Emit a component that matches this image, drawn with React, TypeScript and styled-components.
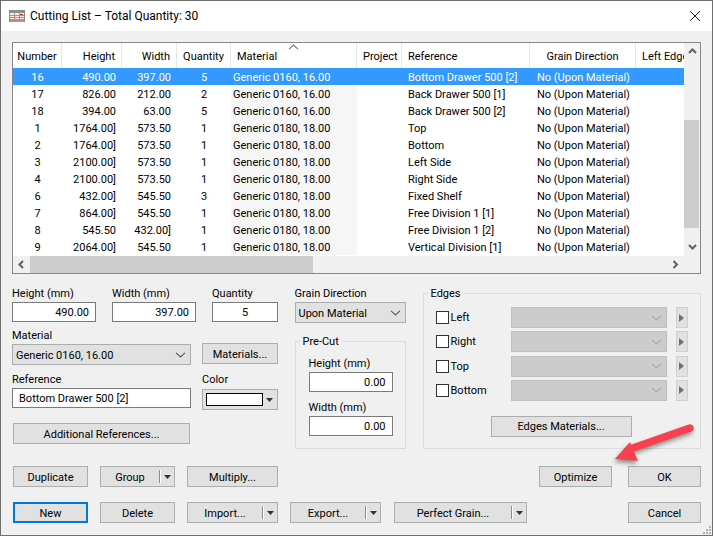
import styled, { createGlobalStyle } from "styled-components";

const GlobalStyle = createGlobalStyle`
  * {
    box-sizing: border-box;
  }

  body {
    margin: 0;
    background: #f0f0f0;
    font-family: Roboto, "Noto Sans", sans-serif;
    font-size: 11px;
    color: #000;
  }
`;

const COLUMNS = "49px 60px 55px 54px 126px 45px 128px 106px 100px";

const rows = [
  ["16", "490.00", "397.00", "5", "Generic 0160, 16.00", "Bottom Drawer 500 [2]"],
  ["17", "826.00", "212.00", "2", "Generic 0160, 16.00", "Back Drawer 500 [1]"],
  ["18", "394.00", "63.00", "5", "Generic 0160, 16.00", "Back Drawer 500 [2]"],
  ["1", "1764.00]", "573.50", "1", "Generic 0180, 18.00", "Top"],
  ["2", "1764.00]", "573.50", "1", "Generic 0180, 18.00", "Bottom"],
  ["3", "2100.00]", "573.50", "1", "Generic 0180, 18.00", "Left Side"],
  ["4", "2100.00]", "573.50", "1", "Generic 0180, 18.00", "Right Side"],
  ["6", "432.00]", "545.50", "3", "Generic 0180, 18.00", "Fixed Shelf"],
  ["7", "864.00]", "545.50", "1", "Generic 0180, 18.00", "Free Division 1 [1]"],
  ["8", "545.50", "432.00]", "1", "Generic 0180, 18.00", "Free Division 1 [2]"],
  ["9", "2064.00]", "545.50", "1", "Generic 0180, 18.00", "Vertical Division [1]"],
];

const Chevron = ({ color = "#5a5a5a", up = false }: { color?: string; up?: boolean }) => (
  <svg width="11" height="6" viewBox="0 0 11 6" style={up ? { transform: "rotate(180deg)" } : undefined}>
    <path d="M1 0.8 L5.5 5 L10 0.8" fill="none" stroke={color} strokeWidth="1.1" />
  </svg>
);

const BoldArrow = ({ dir }: { dir: "up" | "down" | "left" | "right" }) => {
  const paths = {
    up: "M1 6 L4.5 2.5 L8 6",
    down: "M1 2 L4.5 5.5 L8 2",
    left: "M6 1 L2.5 4.5 L6 8",
    right: "M2.5 1 L6 4.5 L2.5 8",
  };
  return (
    <svg width="9" height="9" viewBox="0 0 9 9">
      <path d={paths[dir]} fill="none" stroke="#606060" strokeWidth="2" />
    </svg>
  );
};

const Caret = () => (
  <svg width="7" height="4" viewBox="0 0 7 4">
    <path d="M0 0 H7 L3.5 4 Z" fill="#333" />
  </svg>
);

const TitleIcon = () => (
  <svg width="16" height="13" viewBox="0 0 16 13">
    <rect x="0.5" y="0.5" width="15" height="11" fill="#f3efe9" stroke="#8b8b85" />
    <rect x="1" y="1" width="14" height="2" fill="#7f9a80" />
    <rect x="1" y="9" width="14" height="3" fill="#d98080" />
    <path d="M1 5.5 H15 M1 7.5 H15 M5.5 3 V9 M10.5 3 V9" stroke="#c08a8a" strokeWidth="1" />
    <rect x="11" y="4" width="3" height="1" fill="#c83030" />
  </svg>
);

const SplitButton = ({ label, width }: { label: string; width: number }) => (
  <Button $width={width}>
    <SplitLabel>{label}</SplitLabel>
    <SplitDivider />
    <SplitCaret>
      <Caret />
    </SplitCaret>
  </Button>
);

const Select = ({ value, width }: { value: string; width: number }) => (
  <SelectBox $width={width}>
    <SelectValue>{value}</SelectValue>
    <Chevron />
  </SelectBox>
);

const EdgeRow = ({ label }: { label: string }) => (
  <EdgeLine>
    <Checkbox />
    <EdgeLabel>{label}</EdgeLabel>
    <SelectBox $width={156} $disabled>
      <span />
      <Chevron color="#a8a8a8" />
    </SelectBox>
    <MiniButton>
      <svg width="5" height="8" viewBox="0 0 5 8">
        <path d="M0 0 L5 4 L0 8 Z" fill="#707070" />
      </svg>
    </MiniButton>
  </EdgeLine>
);

const App = () => {
  return (
    <Window>
      <GlobalStyle />
      <TitleBar>
        <TitleIcon />
        <TitleText>Cutting List – Total Quantity: 30</TitleText>
        <CloseIcon width="12" height="12" viewBox="0 0 12 12">
          <path d="M1 1 L11 11 M11 1 L1 11" stroke="#222" strokeWidth="1" fill="none" />
        </CloseIcon>
      </TitleBar>

      <Body>
        <TableFrame>
          <Viewport>
            <HeaderRow>
              <HeaderCell>Number</HeaderCell>
              <HeaderCell $align="right">Height</HeaderCell>
              <HeaderCell $align="right">Width</HeaderCell>
              <HeaderCell>Quantity</HeaderCell>
              <HeaderCell $align="left">
                <SortMark>
                  <Chevron color="#777" up />
                </SortMark>
                Material
              </HeaderCell>
              <HeaderCell $align="left">Project</HeaderCell>
              <HeaderCell $align="left">Reference</HeaderCell>
              <HeaderCell>Grain Direction</HeaderCell>
              <HeaderCell $align="left">Left Edge</HeaderCell>
            </HeaderRow>
            {rows.map((row, i) => (
              <Row key={row[0]} $selected={i === 0}>
                <Cell $align="center">{row[0]}</Cell>
                <Cell $align="right">{row[1]}</Cell>
                <Cell $align="right">{row[2]}</Cell>
                <Cell $align="center">{row[3]}</Cell>
                <MaterialCell $selected={i === 0}>{row[4]}</MaterialCell>
                <Cell />
                <Cell $align="left">{row[5]}</Cell>
                <GrainCell>No (Upon Material)</GrainCell>
                <Cell />
              </Row>
            ))}
          </Viewport>
          <VScroll>
            <ScrollEnd $h={17}>
              <BoldArrow dir="up" />
            </ScrollEnd>
            <VThumb />
            <ScrollEnd $h={17}>
              <BoldArrow dir="down" />
            </ScrollEnd>
          </VScroll>
          <HScroll>
            <ScrollEnd $w={17}>
              <BoldArrow dir="left" />
            </ScrollEnd>
            <HThumb />
            <ScrollEnd $w={17}>
              <BoldArrow dir="right" />
            </ScrollEnd>
          </HScroll>
          <Corner />
        </TableFrame>

        <Form>
          <LeftColumn>
            <SizeRow>
              <Field>
                <Label>Height (mm)</Label>
                <Input $width={84}>490.00</Input>
              </Field>
              <Field>
                <Label>Width (mm)</Label>
                <Input $width={84}>397.00</Input>
              </Field>
              <Field>
                <Label>Quantity</Label>
                <Input $width={66} $center>
                  5
                </Input>
              </Field>
            </SizeRow>
            <MaterialRow>
              <Field>
                <Label>Material</Label>
                <Select value="Generic 0160, 16.00" width={179} />
              </Field>
              <Button $width={76} $mb={1}>
                Materials...
              </Button>
            </MaterialRow>
            <ReferenceRow>
              <Field>
                <Label>Reference</Label>
                <Input $width={179} $left>
                  Bottom Drawer 500 [2]
                </Input>
              </Field>
              <Field>
                <Label>Color</Label>
                <ColorBox>
                  <ColorSwatch />
                  <Caret />
                </ColorBox>
              </Field>
            </ReferenceRow>
            <AdditionalButton $width={177}>Additional References...</AdditionalButton>
          </LeftColumn>

          <MiddleColumn>
            <Field>
              <Label>Grain Direction</Label>
              <Select value="Upon Material" width={111} />
            </Field>
            <PreCutGroup>
              <GroupTitle $shift={-9}>Pre-Cut</GroupTitle>
              <Field>
                <Label>Height (mm)</Label>
                <Input $width={84}>0.00</Input>
              </Field>
              <Field>
                <Label>Width (mm)</Label>
                <Input $width={84}>0.00</Input>
              </Field>
            </PreCutGroup>
          </MiddleColumn>

          <EdgesGroup>
            <GroupTitle $shift={-8}>Edges</GroupTitle>
            <EdgeList>
              <EdgeRow label="Left" />
              <EdgeRow label="Right" />
              <EdgeRow label="Top" />
              <EdgeRow label="Bottom" />
            </EdgeList>
            <EdgesButton $width={141}>Edges Materials...</EdgesButton>
          </EdgesGroup>
        </Form>

        <ActionRow $top={17}>
          <Button $width={75}>Duplicate</Button>
          <SplitButton label="Group" width={75} />
          <Button $width={91}>Multiply...</Button>
          <RightActions>
            <Button $width={73}>Optimize</Button>
            <Button $width={73}>OK</Button>
          </RightActions>
        </ActionRow>
        <ActionRow $top={15}>
          <Button $width={75} $default>
            New
          </Button>
          <Button $width={75}>Delete</Button>
          <SplitButton label="Import..." width={91} />
          <SplitButton label="Export..." width={91} />
          <PerfectGrain>
            <SplitButton label="Perfect Grain..." width={133} />
          </PerfectGrain>
          <RightActions>
            <Button $width={73}>Cancel</Button>
          </RightActions>
        </ActionRow>
      </Body>

      <Grip width="10" height="10" viewBox="0 0 10 10">
        <path d="M7 1h2v2H7z M4 4h2v2H4z M7 4h2v2H7z M1 7h2v2H1z M4 7h2v2H4z M7 7h2v2H7z" fill="#b4b4b4" />
      </Grip>

      <Callout width="90" height="50" viewBox="0 0 90 50">
        <path d="M80 6 L20 27" stroke="#f8404f" strokeWidth="7.5" strokeLinecap="round" fill="none" />
        <path d="M5 37 L20 20 L28 39 Z" fill="#f8404f" />
      </Callout>
    </Window>
  );
};

export default App;

const Window = styled.div`
  position: relative;
  display: flex;
  flex-direction: column;
  width: 713px;
  height: 536px;
  border: 1px solid #6f6f6f;
  background: #f0f0f0;
  overflow: hidden;
`;

const TitleBar = styled.div`
  display: flex;
  align-items: center;
  height: 30px;
  padding: 0 8px;
  background: #fff;
  flex: none;
`;

const TitleText = styled.span`
  margin-left: 5px;
  flex: 1;
  font-size: 12px;
`;

const CloseIcon = styled.svg`
  margin-right: 3px;
`;

const Body = styled.div`
  flex: 1;
  padding: 11px 11px 0;
`;

const TableFrame = styled.div`
  display: grid;
  grid-template-columns: 671px 1fr;
  grid-template-rows: 213px 1fr;
  width: 689px;
  height: 232px;
  border: 1px solid #828790;
  background: #fff;
`;

const Viewport = styled.div`
  overflow: hidden;
`;

const HeaderRow = styled.div`
  display: grid;
  grid-template-columns: ${COLUMNS};
  height: 25px;
`;

const HeaderCell = styled.div<{ $align?: string }>`
  position: relative;
  display: flex;
  align-items: center;
  justify-content: ${(p) =>
    p.$align === "right" ? "flex-end" : p.$align === "left" ? "flex-start" : "center"};
  padding: 1px 6px 0;
  border-right: 1px solid #e5e5e5;
  white-space: nowrap;
  overflow: hidden;
`;

const SortMark = styled.span`
  position: absolute;
  top: 1px;
  left: 57px;
  line-height: 0;
`;

const Row = styled.div<{ $selected?: boolean }>`
  display: grid;
  grid-template-columns: ${COLUMNS};
  height: 17px;
  line-height: 19px;
  background: ${(p) => (p.$selected ? "#3399ff" : "#fff")};
  color: ${(p) => (p.$selected ? "#fff" : "#000")};
`;

const Cell = styled.div<{ $align?: string }>`
  height: 17px;
  padding: 0 6px;
  text-align: ${(p) => p.$align || "left"};
  white-space: nowrap;
  overflow: hidden;
`;

const MaterialCell = styled.div<{ $selected?: boolean }>`
  height: 17px;
  padding: 0 2px;
  background: ${(p) => (p.$selected ? "transparent" : "#f6f6f6")};
  white-space: nowrap;
`;

const GrainCell = styled.div`
  height: 17px;
  padding-left: 7px;
  white-space: nowrap;
`;

const VScroll = styled.div`
  display: flex;
  flex-direction: column;
  justify-content: flex-start;
  background: #f0f0f0;
`;

const ScrollEnd = styled.div<{ $w?: number; $h?: number }>`
  display: flex;
  align-items: center;
  justify-content: center;
  flex: none;
  width: ${(p) => (p.$w ? `${p.$w}px` : "100%")};
  height: ${(p) => (p.$h ? `${p.$h}px` : "100%")};
`;

const VThumb = styled.div`
  width: 15px;
  height: 108px;
  margin-top: 60px;
  margin-bottom: 11px;
  background: #cdcdcd;
`;

const HScroll = styled.div`
  display: flex;
  justify-content: space-between;
  background: #f0f0f0;
  min-width: 0;
`;

const HThumb = styled.div`
  width: 283px;
  margin-right: 354px;
  background: #cdcdcd;
`;

const Corner = styled.div`
  background: #f0f0f0;
`;

const Form = styled.div`
  display: flex;
  align-items: flex-start;
  margin-top: 11px;
`;

const LeftColumn = styled.div`
  width: 267px;
  margin-right: 16px;
`;

const SizeRow = styled.div`
  display: flex;
  gap: 16px;
`;

const MaterialRow = styled.div`
  display: flex;
  align-items: flex-end;
  gap: 11px;
  margin-top: 5px;
`;

const ReferenceRow = styled.div`
  display: flex;
  gap: 11px;
  margin-top: 6px;
`;

const Field = styled.div`
  display: flex;
  flex-direction: column;
`;

const Label = styled.label`
  height: 17px;
  line-height: 17px;
  white-space: nowrap;
`;

const Input = styled.div<{ $width: number; $center?: boolean; $left?: boolean }>`
  width: ${(p) => p.$width}px;
  height: 20px;
  padding: 0 6px;
  line-height: 19px;
  background: #fff;
  border: 1px solid #7a7a7a;
  text-align: ${(p) => (p.$center ? "center" : p.$left ? "left" : "right")};
  white-space: nowrap;
`;

const SelectBox = styled.div<{ $width: number; $disabled?: boolean }>`
  display: flex;
  align-items: center;
  justify-content: space-between;
  width: ${(p) => p.$width}px;
  height: 21px;
  padding: 0 4px 0 3px;
  background: ${(p) => (p.$disabled ? "#cccccc" : "#e1e1e1")};
  border: 1px solid ${(p) => (p.$disabled ? "#bfbfbf" : "#adadad")};
  white-space: nowrap;
`;

const SelectValue = styled.span`
  padding-top: 1px;
`;

const ColorBox = styled.div`
  display: flex;
  align-items: center;
  justify-content: space-between;
  width: 76px;
  height: 21px;
  margin-top: 1px;
  padding: 0 4px 0 3px;
  background: #e1e1e1;
  border: 1px solid #adadad;
`;

const ColorSwatch = styled.div`
  width: 57px;
  height: 13px;
  background: #fff;
  border: 1px solid #000;
`;

const Button = styled.div<{ $width: number; $default?: boolean; $mb?: number }>`
  display: flex;
  align-items: center;
  justify-content: center;
  flex: none;
  width: ${(p) => p.$width}px;
  height: 21px;
  margin-bottom: ${(p) => p.$mb || 0}px;
  padding-top: 1px;
  background: #e1e1e1;
  border: ${(p) => (p.$default ? "2px solid #0078d7" : "1px solid #adadad")};
  white-space: nowrap;
`;

const AdditionalButton = styled(Button)`
  margin-top: 13px;
  margin-left: 1px;
`;

const SplitLabel = styled.span`
  flex: 1;
  text-align: center;
`;

const SplitDivider = styled.span`
  width: 2px;
  height: 13px;
  margin-top: -1px;
  border-left: 1px solid #8c8c8c;
  border-right: 1px solid #fff;
`;

const SplitCaret = styled.span`
  display: flex;
  justify-content: center;
  width: 13px;
  margin-top: -1px;
`;

const MiddleColumn = styled.div`
  width: 111px;
  margin-right: 17px;
`;

const Group = styled.fieldset`
  margin: 0;
  background: transparent;
  border: 1px solid #dcdcdc;
  min-width: 0;
`;

const GroupTitle = styled.legend<{ $shift: number }>`
  height: 16px;
  margin-left: ${(p) => p.$shift}px;
  padding: 0 3px;
  line-height: 17px;
`;

const PreCutGroup = styled(Group)`
  display: flex;
  flex-direction: column;
  gap: 7px;
  width: 111px;
  height: 116px;
  margin-top: 10px;
  padding: 6px 0 0 13px;
`;

const EdgesGroup = styled(Group)`
  width: 279px;
  height: 164px;
  padding: 6px 0 0 12px;
`;

const EdgeList = styled.div`
  display: flex;
  flex-direction: column;
  gap: 3.34px;
`;

const EdgeLine = styled.div`
  display: flex;
  align-items: center;
  height: 21px;
`;

const Checkbox = styled.span`
  flex: none;
  width: 13px;
  height: 13px;
  background: #fff;
  border: 1px solid #333;
`;

const EdgeLabel = styled.span`
  width: 62px;
  padding-left: 2px;
`;

const MiniButton = styled.span`
  display: flex;
  align-items: center;
  justify-content: center;
  flex: none;
  width: 12px;
  height: 21px;
  margin-left: 9px;
  background: #e1e1e1;
  border: 1px solid #cfcfcf;
`;

const EdgesButton = styled(Button)`
  margin-top: 15px;
  margin-left: 55px;
`;

const ActionRow = styled.div<{ $top: number }>`
  display: flex;
  gap: 12px;
  margin-top: ${(p) => p.$top}px;
  margin-left: 1px;
`;

const RightActions = styled.div`
  display: flex;
  gap: 16px;
  margin-left: auto;
`;

const PerfectGrain = styled.div`
  margin-left: 1px;
`;

const Grip = styled.svg`
  position: absolute;
  right: 0;
  bottom: 0;
`;

const Callout = styled.svg`
  position: absolute;
  left: 609px;
  top: 421px;
  filter: drop-shadow(-1px 3px 2px rgba(0, 0, 0, 0.4));
`;
